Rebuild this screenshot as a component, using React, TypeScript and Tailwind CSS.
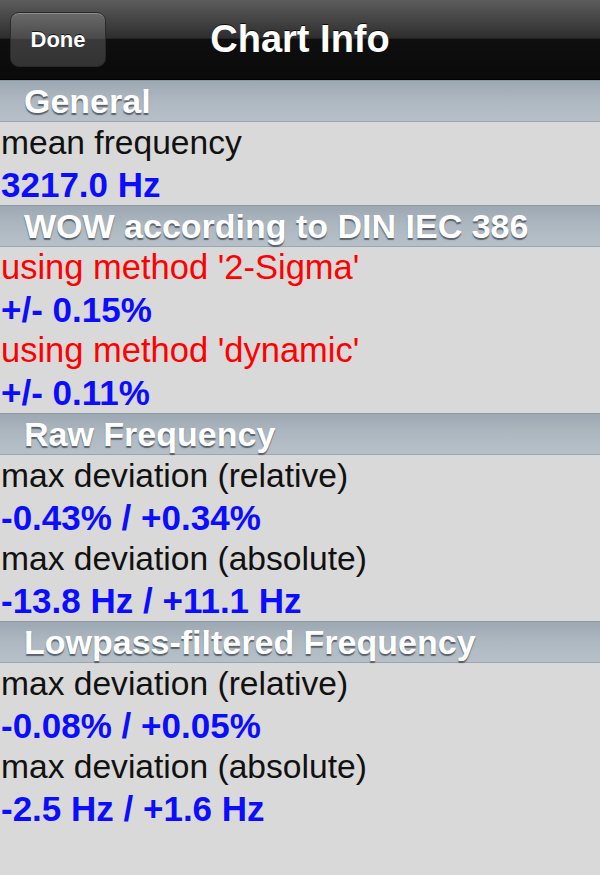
import React from "react";

type Row = { text: string; kind: "label" | "warn" | "value" };
type Section = { title: string; rows: Row[] };

const sections: Section[] = [
  {
    title: "General",
    rows: [
      { text: "mean frequency", kind: "label" },
      { text: "3217.0 Hz", kind: "value" },
    ],
  },
  {
    title: "WOW according to DIN IEC 386",
    rows: [
      { text: "using method '2-Sigma'", kind: "warn" },
      { text: "+/- 0.15%", kind: "value" },
      { text: "using method 'dynamic'", kind: "warn" },
      { text: "+/- 0.11%", kind: "value" },
    ],
  },
  {
    title: "Raw Frequency",
    rows: [
      { text: "max deviation (relative)", kind: "label" },
      { text: "-0.43% / +0.34%", kind: "value" },
      { text: "max deviation (absolute)", kind: "label" },
      { text: "-13.8 Hz / +11.1 Hz", kind: "value" },
    ],
  },
  {
    title: "Lowpass-filtered Frequency",
    rows: [
      { text: "max deviation (relative)", kind: "label" },
      { text: "-0.08% / +0.05%", kind: "value" },
      { text: "max deviation (absolute)", kind: "label" },
      { text: "-2.5 Hz / +1.6 Hz", kind: "value" },
    ],
  },
];

const rowStyle: Record<Row["kind"], string> = {
  label: "text-[#111111] text-[33.6px]",
  warn: "text-[#ff0000] text-[34.5px]",
  value: "text-[#0c0cff] font-bold text-[35px]",
};

const SectionHeader = ({ title }: { title: string }) => (
  <div className="h-[42px] border-t border-[#8c98a3] border-b border-b-[#9aa5ae] bg-gradient-to-b from-[#9ca8b2] via-[#aeb8c1] to-[#b7c0c8] pl-[24px] flex items-center">
    <span className="text-[34px] leading-none font-bold text-white [text-shadow:0_2px_1px_rgba(60,70,80,0.75)]">
      {title}
    </span>
  </div>
);

export default function App() {
  return (
    <div className="w-[600px] h-[875px] bg-[#d9d9d9] overflow-hidden font-['Liberation_Sans',Arial,sans-serif]">
      {/* Nav bar */}
      <div className="relative h-[80px] flex items-center justify-center bg-[linear-gradient(to_bottom,#5c5c5c_0%,#2e2e2e_48%,#0f0f0f_50%,#0a0a0a_100%)] border-b border-black">
        <button className="absolute left-[10px] top-[12px] w-[96px] h-[55px] rounded-[9px] border border-[#2a2a2a] bg-[linear-gradient(to_bottom,#6a6a6a_0%,#4a4a4a_48%,#3a3a3a_50%,#333333_100%)] shadow-[inset_0_1px_0_rgba(255,255,255,0.25)] flex items-center justify-center">
          <span className="text-[22px] font-bold text-white [text-shadow:0_-1px_0_rgba(0,0,0,0.7)]">
            Done
          </span>
        </button>
        <h1 className="text-[38px] font-bold text-white [text-shadow:0_-1px_0_rgba(0,0,0,0.8)]">
          Chart Info
        </h1>
      </div>

      {/* Sections */}
      {sections.map((s) => (
        <div key={s.title}>
          <SectionHeader title={s.title} />
          {s.rows.map((r, i) => (
            <div
              key={i}
              className={`h-[41.5px] leading-[41.5px] pl-[1px] whitespace-nowrap ${rowStyle[r.kind]}`}
            >
              {r.text}
            </div>
          ))}
        </div>
      ))}
    </div>
  );
}
